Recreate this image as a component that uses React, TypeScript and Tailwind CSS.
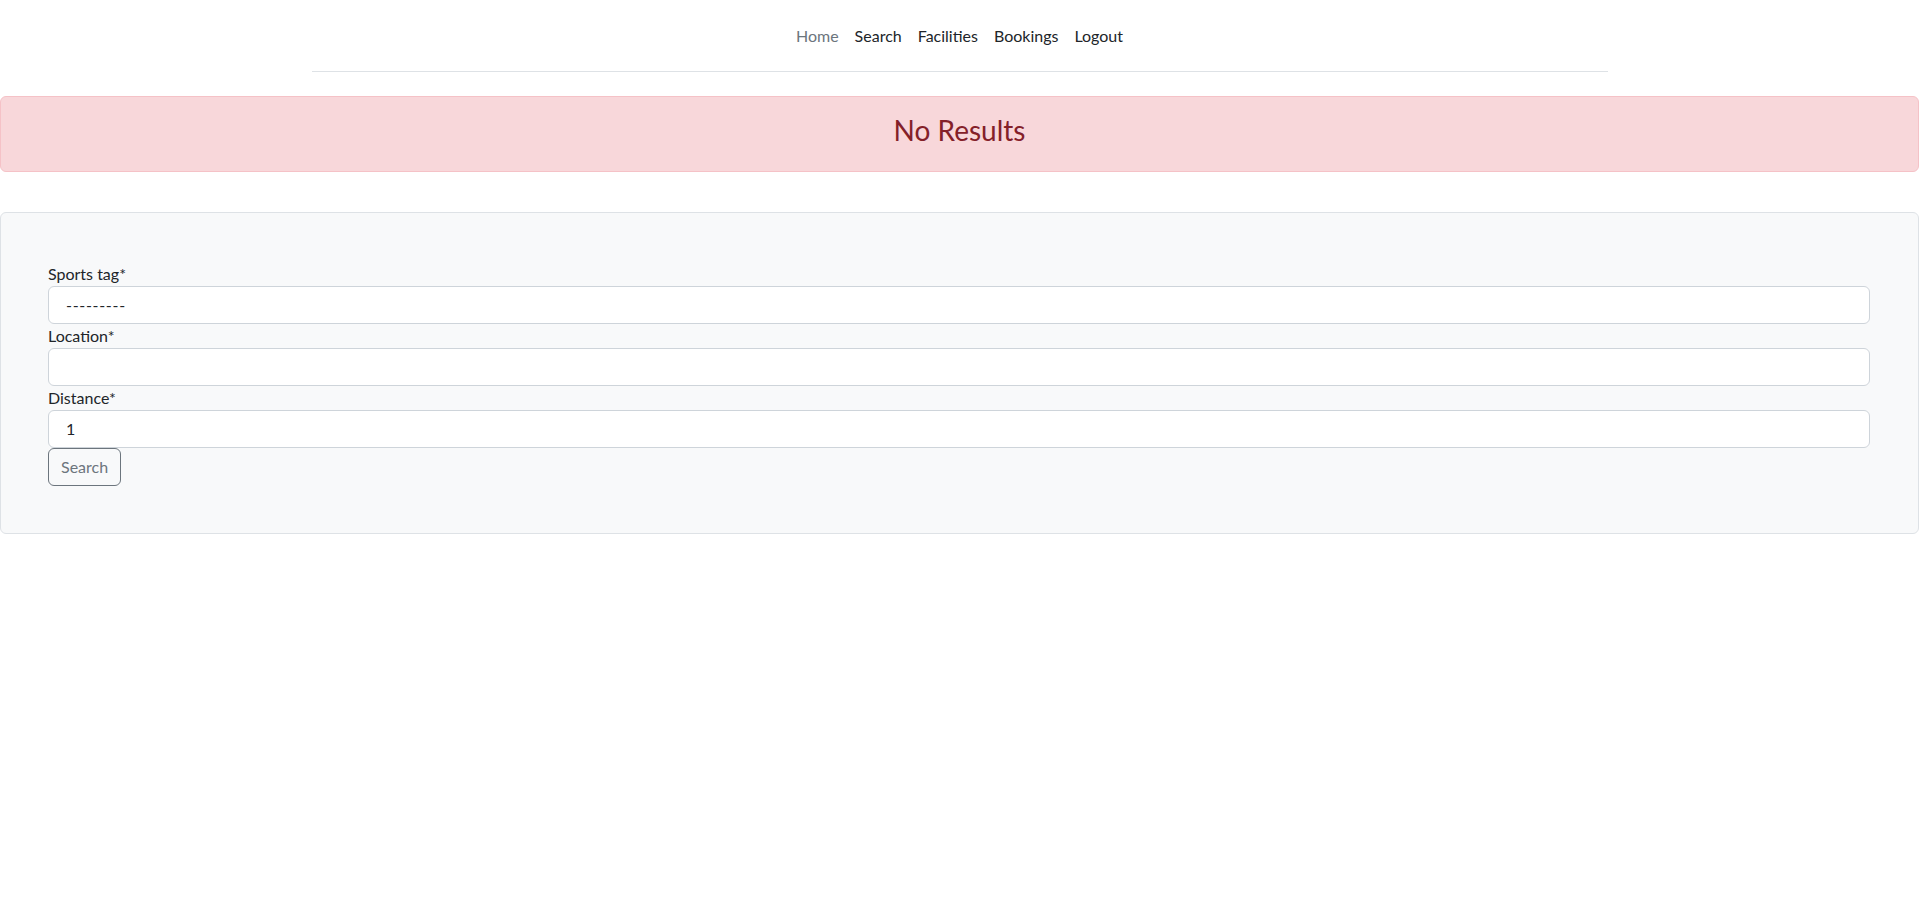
import React from "react";

export default function App() {
  const font = { fontFamily: 'Lato, "Noto Sans", sans-serif' };
  return (
    <div className="min-h-[920px] bg-white text-[16px] leading-6 text-[#212529]" style={font}>
      <div className="mx-auto w-[1320px] px-3">
        <header className="flex h-[72px] items-center justify-center mb-6 border-b border-[#dee2e6]">
          <ul className="flex">
            <li><a className="block px-2 py-2 text-[#6c757d]">Home</a></li>
            <li><a className="block px-2 py-2 text-[#212529]">Search</a></li>
            <li><a className="block px-2 py-2 text-[#212529]">Facilities</a></li>
            <li><a className="block px-2 py-2 text-[#212529]">Bookings</a></li>
            <li><a className="block px-2 py-2 text-[#212529]">Logout</a></li>
          </ul>
        </header>
      </div>
      <div className="mb-10 flex h-[76px] items-center justify-center rounded-md border border-[#f5c2c7] bg-[#f8d7da] pb-[6px] text-center text-[#842029]">
        <h3 className="text-[28px] leading-[1.2] font-normal">No Results</h3>
      </div>
      <div className="h-[322px] rounded-md border border-[#dee2e6] bg-[#f8f9fa] pl-[47px] pr-[48px] pt-[49px]">
        <form className="flex flex-col">
          <label className="block">Sports tag*</label>
          <div className="flex h-[38px] items-center rounded-md border border-[#ced4da] bg-white pl-[17px] tracking-[0.7px] text-[#212529]">
            ---------
          </div>
          <label className="block">Location*</label>
          <div className="h-[38px] rounded-md border border-[#ced4da] bg-white"></div>
          <label className="block">Distance*</label>
          <div className="flex h-[38px] items-center rounded-md border border-[#ced4da] bg-white pl-[17px] text-[#212529]">
            1
          </div>
          <div>
            <button type="button" className="h-[38px] rounded-md border border-[#6c757d] bg-transparent px-3 text-[#6c757d]">
              Search
            </button>
          </div>
        </form>
      </div>
    </div>
  );
}
